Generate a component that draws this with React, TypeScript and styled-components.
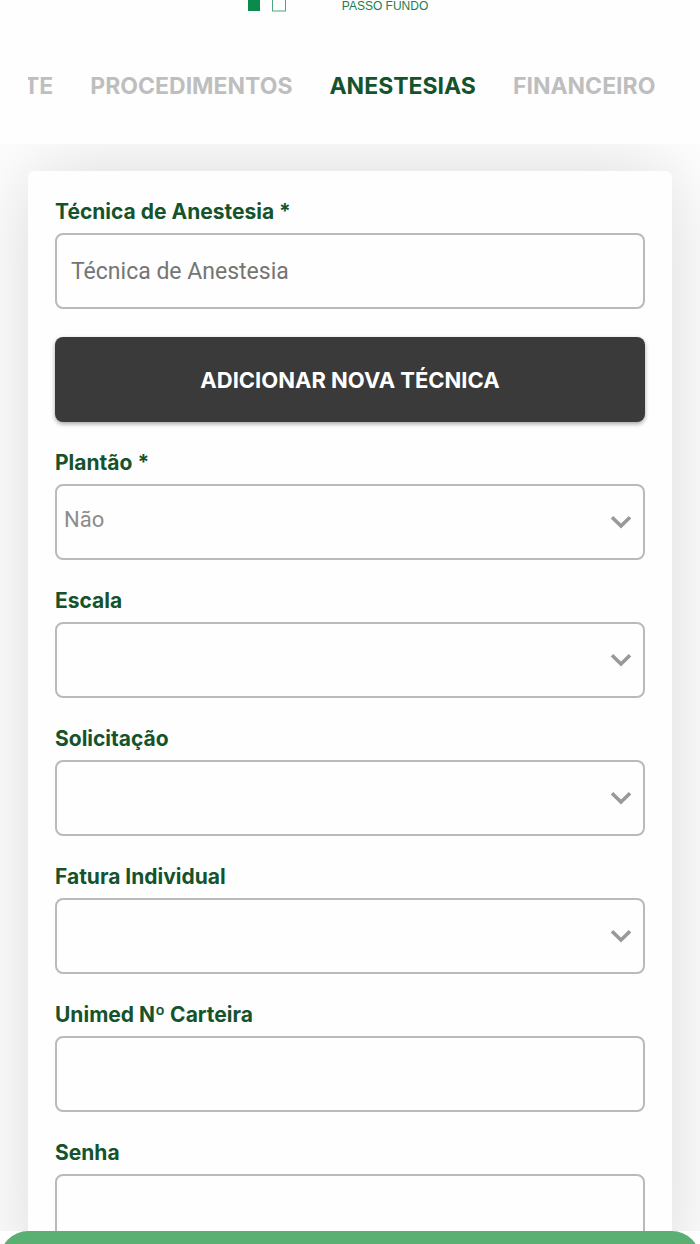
import React from "react";
import styled, { createGlobalStyle } from "styled-components";

const green = "#14532b";
const heading = `Inter, "Open Sans", sans-serif`;

const GlobalStyle = createGlobalStyle`
  *, *::before, *::after { box-sizing: border-box; }
  body { margin: 0; background: #fefefe; font-family: Roboto, sans-serif; }
`;

const Screen = styled.div`
  display: flex;
  flex-direction: column;
  height: 100vh;
  overflow: hidden;
`;

const Header = styled.header`
  flex: none;
  padding-bottom: 40px;
`;

const Brand = styled.div`
  display: flex;
  justify-content: center;
  align-items: flex-start;
  gap: 56px;
  height: 12px;
  padding-right: 24px;
`;

const BrandMark = styled.svg`
  flex: none;
  width: 38px;
  height: 12px;
`;

const BrandName = styled.span`
  font: 12px/12px "Liberation Sans", sans-serif;
  color: #1d7d50;
`;

const Tabs = styled.nav`
  margin: 56px 28px 0;
  overflow: hidden;
`;

const TabTrack = styled.div`
  display: flex;
  gap: 37px;
  margin-left: -4px;
`;

const Tab = styled.a<{ $active?: boolean }>`
  flex: none;
  font: 700 23px/36px ${heading};
  color: ${(p) => (p.$active ? green : "#bebebe")};
  text-decoration: none;
`;

const Main = styled.main`
  flex: 1;
  min-height: 0;
  overflow: hidden;
  padding: 27px 28px 0;
`;

const Card = styled.form`
  display: flex;
  flex-direction: column;
  gap: 28px;
  padding: 28px 27px;
  min-height: 100%;
  background: #fefefe;
  border-radius: 6px;
  box-shadow: 0 0 80px rgba(0, 0, 0, 0.15);
`;

const Field = styled.div`
  display: flex;
  flex-direction: column;
  gap: 9px;
`;

const Label = styled.label`
  font: 700 21px/25px ${heading};
  color: ${green};
`;

const TextInput = styled.input`
  width: 100%;
  height: 76px;
  padding: 0 14px;
  border: 2px solid #bababa;
  border-radius: 8px;
  background: transparent;
  font: 23px/28px Roboto, sans-serif;
  color: #444;
  &::placeholder { color: #757575; opacity: 1; }
`;

const SelectBox = styled.div`
  display: grid;
  align-items: center;
  & > * { grid-area: 1 / 1; }
`;

const Select = styled.select`
  appearance: none;
  width: 100%;
  height: 76px;
  padding: 0 48px 4px 7px;
  border: 2px solid #bababa;
  border-radius: 8px;
  background: transparent;
  font: 22px/28px Roboto, sans-serif;
  color: #8c8c8c;
`;

const Chevron = styled.svg`
  justify-self: end;
  width: 22px;
  height: 14px;
  margin-right: 13px;
  pointer-events: none;
`;

const AddButton = styled.button`
  height: 85px;
  border: 0;
  border-radius: 8px;
  background: #3a3a3a;
  box-shadow: 0 2px 4px rgba(0, 0, 0, 0.35);
  font: 700 22px/28px ${heading};
  color: #fff;
`;

const Footer = styled.footer`
  flex: none;
  height: 13px;
  overflow: hidden;
`;

const FooterBar = styled.div`
  height: 56px;
  border-radius: 28px 28px 0 0;
  background: #5aaf73;
`;

const tabs = ["TE", "PROCEDIMENTOS", "ANESTESIAS", "FINANCEIRO"];

function TextField({ id, label, placeholder }: { id: string; label: string; placeholder?: string }) {
  return (
    <Field>
      <Label htmlFor={id}>{label}</Label>
      <TextInput id={id} type="text" placeholder={placeholder} />
    </Field>
  );
}

function SelectField({ id, label, options }: { id: string; label: string; options: string[] }) {
  return (
    <Field>
      <Label htmlFor={id}>{label}</Label>
      <SelectBox>
        <Select id={id}>
          {options.map((o) => (
            <option key={o} value={o}>{o}</option>
          ))}
        </Select>
        <Chevron viewBox="0 0 22 14" aria-hidden="true">
          <path d="M2 2.2 L11 11 L20 2.2" fill="none" stroke="#999" strokeWidth="3.6" />
        </Chevron>
      </SelectBox>
    </Field>
  );
}

export default function App() {
  return (
    <>
      <GlobalStyle />
      <Screen>
        <Header>
          <Brand>
            <BrandMark viewBox="0 0 38 12" aria-hidden="true">
              <rect x="0" y="-4" width="12" height="15" fill="#0b8a4b" />
              <rect x="24.5" y="-4" width="13" height="15" fill="none" stroke="#4fa57c" />
            </BrandMark>
            <BrandName>PASSO FUNDO</BrandName>
          </Brand>
          <Tabs>
            <TabTrack>
              {tabs.map((t) => (
                <Tab key={t} href="#" $active={t === "ANESTESIAS"}>{t}</Tab>
              ))}
            </TabTrack>
          </Tabs>
        </Header>
        <Main>
          <Card>
            <TextField id="tecnica" label="Técnica de Anestesia *" placeholder="Técnica de Anestesia" />
            <AddButton type="button">ADICIONAR NOVA TÉCNICA</AddButton>
            <SelectField id="plantao" label="Plantão *" options={["Não"]} />
            <SelectField id="escala" label="Escala" options={[""]} />
            <SelectField id="solicitacao" label="Solicitação" options={[""]} />
            <SelectField id="fatura" label="Fatura Individual" options={[""]} />
            <TextField id="carteira" label="Unimed Nº Carteira" />
            <TextField id="senha" label="Senha" />
          </Card>
        </Main>
        <Footer>
          <FooterBar />
        </Footer>
      </Screen>
    </>
  );
}
